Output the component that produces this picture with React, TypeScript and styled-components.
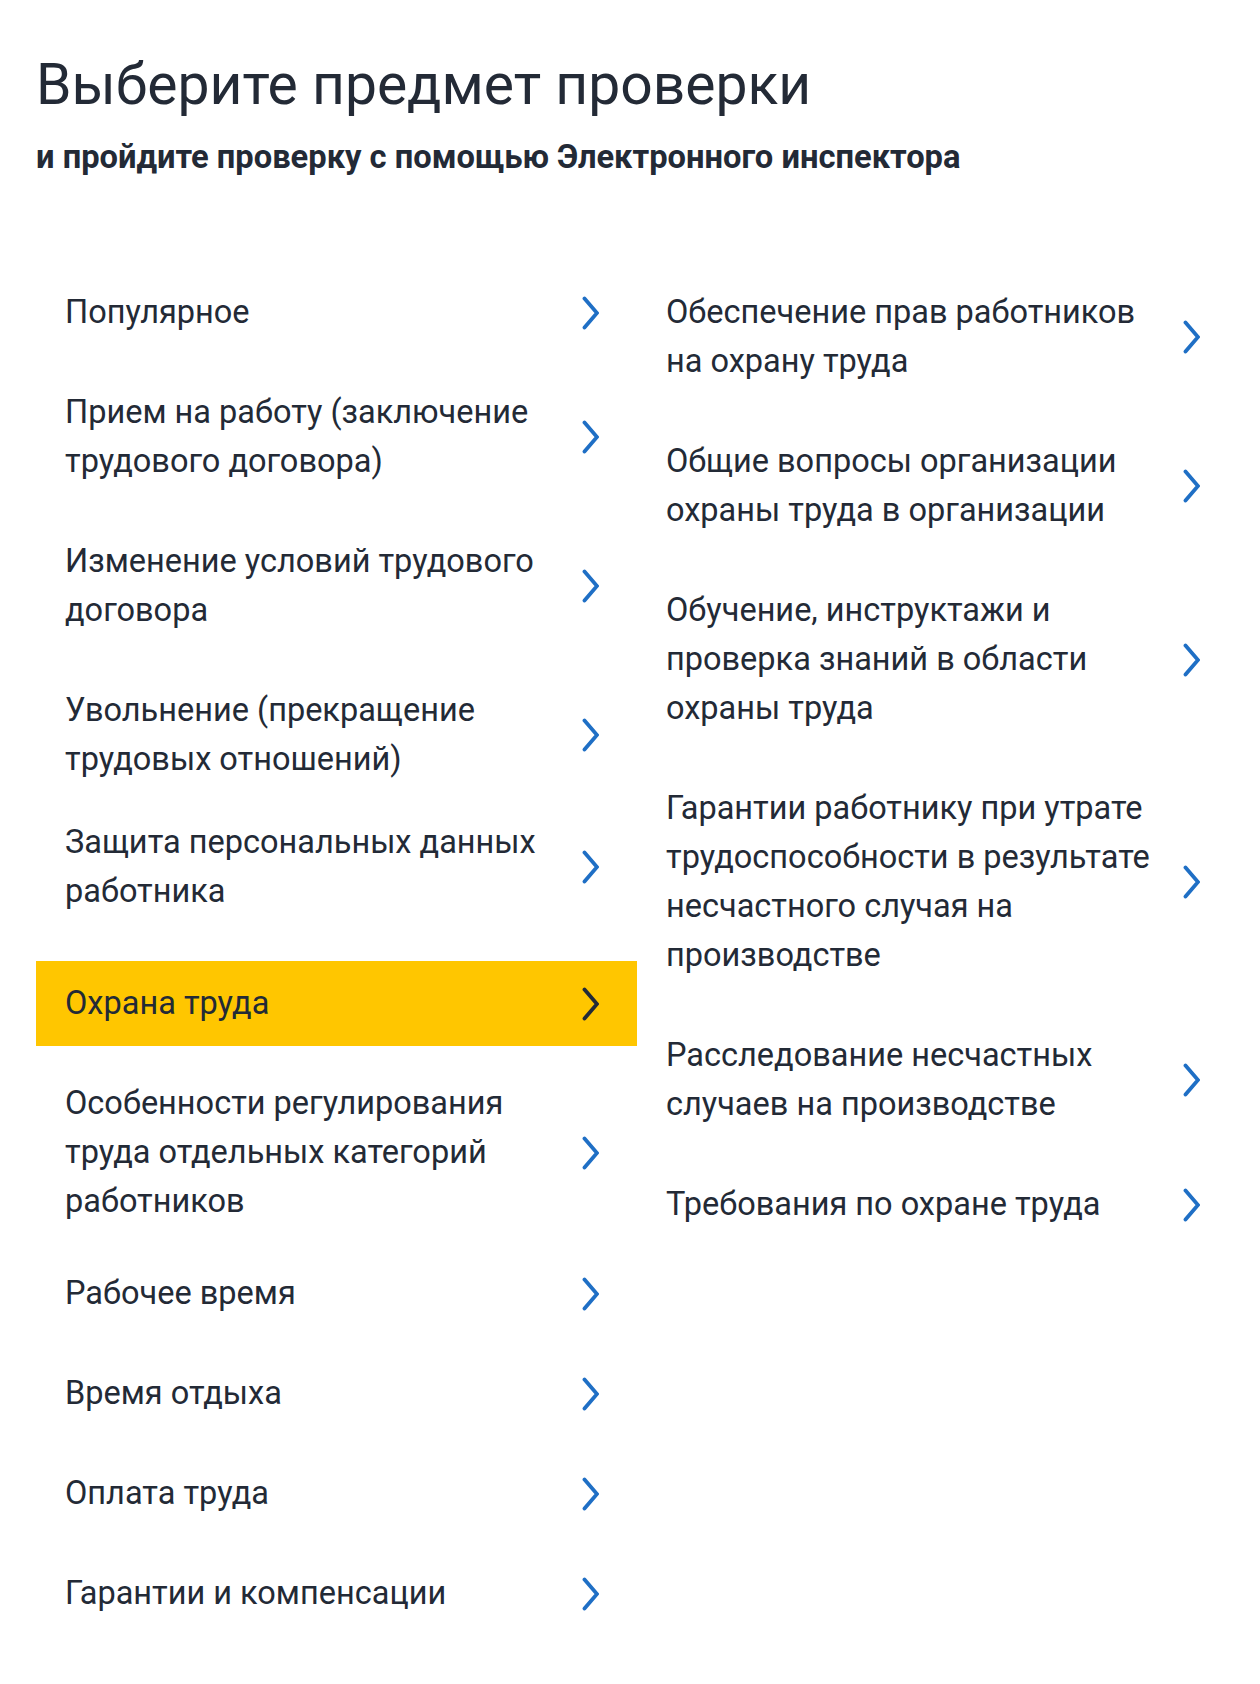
import React from "react";
import styled, { createGlobalStyle } from "styled-components";

const GlobalStyle = createGlobalStyle`
  html, body {
    margin: 0;
    padding: 0;
    background: #ffffff;
  }

  body {
    font-family: Roboto, "Noto Sans", "Liberation Sans", sans-serif;
    color: #232a36;
  }
`;

const Page = styled.div`
  padding: 52px 22px 40px 36px;
`;

const Title = styled.h1`
  margin: 0;
  font-size: 57px;
  line-height: 66px;
  font-weight: 400;
  color: #232a36;
`;

const Subtitle = styled.p`
  margin: 20px 0 0;
  font-size: 32.7px;
  line-height: 38px;
  font-weight: 700;
  color: #232a36;
`;

const Columns = styled.div`
  display: grid;
  grid-template-columns: 601px 601px;
  align-items: start;
  margin-top: 94px;
`;

const List = styled.ul`
  list-style: none;
  margin: 0;
  padding: 0;
  display: flex;
  flex-direction: column;
  gap: 15px;
`;

const Item = styled.li<{ $active?: boolean; $shift?: number }>`
  display: flex;
  align-items: center;
  gap: 22px;
  margin-top: ${({ $shift }) => $shift ?? 0}px;
  padding: 18px 38px 18px 29px;
  background: ${({ $active }) => ($active ? "#ffc600" : "transparent")};
  cursor: pointer;
`;

const Label = styled.span`
  flex: 1;
  font-size: 32.5px;
  line-height: 49px;
  color: #232a36;
`;

const Chevron = styled.svg<{ $active?: boolean }>`
  flex: none;
  width: 17px;
  height: 34px;
  color: ${({ $active }) => ($active ? "#222a38" : "#1f6fc5")};
`;

type Topic = { label: string; active?: boolean; shift?: number };

const leftTopics: Topic[] = [
  { label: "Популярное" },
  { label: "Прием на работу (заключение трудового договора)" },
  { label: "Изменение условий трудового договора" },
  { label: "Увольнение (прекращение трудовых отношений)" },
  { label: "Защита персональных данных работника", shift: -17 },
  { label: "Охрана труда", active: true, shift: 12 },
  { label: "Особенности регулирования труда отдельных категорий работников" },
  { label: "Рабочее время", shift: -8 },
  { label: "Время отдыха" },
  { label: "Оплата труда" },
  { label: "Гарантии и компенсации" },
];

const rightTopics: Topic[] = [
  { label: "Обеспечение прав работников на охрану труда" },
  { label: "Общие вопросы организации охраны труда в организации" },
  { label: "Обучение, инструктажи и проверка знаний в области охраны труда" },
  {
    label:
      "Гарантии работнику при утрате трудоспособности в результате несчастного случая на производстве",
  },
  { label: "Расследование несчастных случаев на производстве" },
  { label: "Требования по охране труда" },
];

function Arrow({ active }: { active?: boolean }) {
  return (
    <Chevron $active={active} viewBox="0 0 17 34" fill="none">
      <polyline
        points="2.5,2.5 15,17 2.5,31.5"
        stroke="currentColor"
        strokeWidth="3.8"
        strokeLinecap="round"
        strokeLinejoin="miter"
      />
    </Chevron>
  );
}

function TopicList({ topics }: { topics: Topic[] }) {
  return (
    <List>
      {topics.map((t) => (
        <Item key={t.label} $active={t.active} $shift={t.shift}>
          <Label>{t.label}</Label>
          <Arrow active={t.active} />
        </Item>
      ))}
    </List>
  );
}

export default function App() {
  return (
    <>
      <GlobalStyle />
      <Page>
        <Title>Выберите предмет проверки</Title>
        <Subtitle>и пройдите проверку с помощью Электронного инспектора</Subtitle>
        <Columns>
          <TopicList topics={leftTopics} />
          <TopicList topics={rightTopics} />
        </Columns>
      </Page>
    </>
  );
}
